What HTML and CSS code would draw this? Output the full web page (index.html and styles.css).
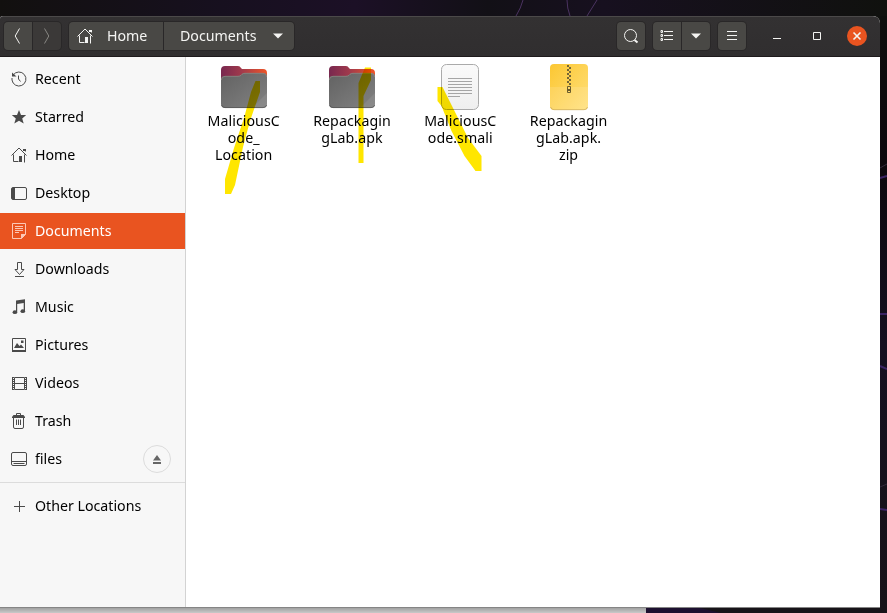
FILE: index.html
```html
<!DOCTYPE html>
<html lang="en">
<head>
<meta charset="utf-8">
<title>Documents</title>
<link rel="stylesheet" href="styles.css">
</head>
<body>
<div class="desktop">
<svg class="wallpaper" viewBox="0 0 887 613">
  <defs>
    <linearGradient id="glow"><stop offset="0" stop-color="#12100f"/><stop offset=".25" stop-color="#17101f"/><stop offset=".4" stop-color="#1c1026"/><stop offset=".55" stop-color="#121016"/><stop offset=".68" stop-color="#17101f"/><stop offset="1" stop-color="#10110e"/></linearGradient>
    <linearGradient id="edge" x2="0" y2="1"><stop offset="0" stop-color="#0e0f0d"/><stop offset=".25" stop-color="#0c080d"/><stop offset=".55" stop-color="#151020"/><stop offset="1" stop-color="#171318"/></linearGradient>
  </defs>
  <path fill="url(#glow)" d="M0 0h887v24H0z"/>
  <path fill="url(#edge)" d="M880 16h7v597h-7z"/>
  <path fill="#171318" d="M646 607h241v6H646z"/>
  <path fill="#1d1030" d="M646 607h50l25 6h-75z"/>
  <g fill="none" stroke="#4b3361"><path d="M523 0q-2 8-7 16M567 0q0 8 3 16M597 0l-10 16"/></g>
  <g fill="none" stroke="#3b2464"><path d="M880 178l7-2M880 314h7M880 366l7 3M880 509l7 1" stroke-width="2"/><path d="M880 168l7-4M880 487l7-3" stroke="#332b3b"/></g>
</svg>
<main class="window">
  <header class="headerbar">
    <div class="group nav">
      <button class="btn"><svg width="16" height="16" viewBox="0 0 16 16"><path class="line" d="M9.500 .5 5.200 8l4.300 7.500"/></svg></button>
      <button class="btn disabled"><svg width="16" height="16" viewBox="0 0 16 16"><path class="line" d="M5.500 .5 9.800 8l-4.300 7.500"/></svg></button>
    </div>
    <div class="group path">
      <button class="btn crumb-home"><svg width="16" height="16" viewBox="0 0 16 16"><path class="line" d="M.5 8.500 8 1l7.500 7.500M2.500 7.500v7h5M13.500 7.500v8"/><path d="M8 9h3v6H8zM12 2h3v3l-1-1h-2z"/></svg><span class="text">Home</span></button>
      <button class="btn crumb-doc"><span class="text doc-text">Documents</span><svg width="10" height="6" viewBox="0 0 10 6"><path d="M0 .5h10L5 5.500z"/></svg></button>
    </div>
    <div class="tools">
      <button class="btn single"><svg width="16" height="16" viewBox="0 0 16 16"><circle class="line" cx="7.500" cy="7.500" r="6"/><path class="line heavy" d="m11.500 12 3 2.500"/></svg></button>
      <div class="group">
        <button class="btn"><svg width="14" height="12" viewBox="0 0 14 12"><path class="line" d="M4 1.500h9M4 5.500h9M4 9.500h9M1 .5h1.500v2H1zM1 4.500h1.500v2H1zM1 8.500h1.500v2H1z"/></svg></button>
        <button class="btn"><svg width="10" height="6" viewBox="0 0 10 6"><path d="M0 .5h10L5 5.500z"/></svg></button>
      </div>
      <button class="btn single"><svg width="10" height="10" viewBox="0 0 10 10"><path class="line" d="M0 .5h10M0 4.500h10M0 8.500h10"/></svg></button>
    </div>
    <div class="controls">
      <svg width="8" height="8" viewBox="0 0 8 8"><path d="M0 6h8v1H0z"/></svg>
      <svg width="8" height="8" viewBox="0 0 8 8"><path class="line" d="M.5 .5h7v7h-7z"/></svg>
      <svg width="20" height="20" viewBox="0 0 20 20"><circle class="close" cx="10" cy="10" r="10"/><path class="line cross" d="m6.500 6.500 7 7m0-7-7 7"/></svg>
    </div>
  </header>
  <div class="body">
    <nav class="sidebar">
      <div class="row"><svg class="icon" viewBox="0 0 16 16"><path class="line" d="M2.200 4A7 7 0 1 1 1 9M7.500 4.500V8l2 2.500"/><path d="M1 1.500v4h4.500zM.5 7h1v2h-1z"/></svg><span>Recent</span></div>
      <div class="row"><svg class="icon" viewBox="0 0 16 16"><path d="m8 1 2 5 5.200.1-4 3.300 1.500 5L8 11.700l-4.700 2.700 1.500-5-4-3.300L6 6z"/></svg><span>Starred</span></div>
      <div class="row"><svg class="icon" viewBox="0 0 16 16"><path class="line" d="M.5 8.500 8 1l7.500 7.500M2.500 7.500v7h5M13.500 7.500v8"/><path d="M8 9h3v6H8zM12 2h3v3l-1-1h-2z"/></svg><span>Home</span></div>
      <div class="row"><svg class="icon" viewBox="0 0 16 16"><rect class="line" x=".5" y="2.500" width="15" height="12" rx="1.500"/><path d="M1 3h3v11H1z"/></svg><span>Desktop</span></div>
      <div class="row selected"><svg class="icon" viewBox="0 0 16 16"><path class="line" d="M1.500 .5h13v11l-4 4h-9zM4 3.500h8M4 5.500h8M4 7.500h8M4 9.500h4"/><path d="M10 11h5l-5 5z"/></svg><span>Documents</span></div>
      <div class="row"><svg class="icon" viewBox="0 0 16 16"><path class="line" d="M6.500 1.500h4v7H13L8.500 13.500 4 8.500h2.500zM4 15.500h9"/></svg><span>Downloads</span></div>
      <div class="row"><svg class="icon" viewBox="0 0 16 16"><path d="M5 1.500 14 .3v12h-1.300V4L6.200 5v8.200H5z"/><ellipse cx="3.900" cy="13.200" rx="2.300" ry="1.900"/><ellipse cx="11.800" cy="12.200" rx="2.300" ry="1.900"/></svg><span>Music</span></div>
      <div class="row"><svg class="icon" viewBox="0 0 16 16"><path class="line" d="M1.500 1.500h13v12h-13z"/><path d="M1 13h14v2H1zM3 11l3-5 2.500 3L10 7.500l3 3.500zM10 3.500h2.500V6H10z"/></svg><span>Pictures</span></div>
      <div class="row"><svg class="icon" viewBox="0 0 16 16"><path class="line" d="M3.500 2.500h10v12h-10zM3 8.500h11"/><path class="line" d="M1.500 2v13M15.500 2v13"/><path class="line" d="M2.500 2v13M14.500 2v13" stroke-dasharray="1 1"/></svg><span>Videos</span></div>
      <div class="row"><svg class="icon" viewBox="0 0 16 16"><path class="line" d="M2.500 5v9q0 1.500 1.500 1.500h7q1.500 0 1.500-1.500V5M5.500 6.500V12M7.500 6.500V12M9.500 6.500V12M5.500 2V.5h4V2"/><path d="M2.500 2h10l1.500 2v1H1V4z"/></svg><span>Trash</span></div>
      <div class="row"><svg class="icon" viewBox="0 0 16 16"><rect class="line" x=".5" y="1.500" width="15" height="13" rx="1.500"/><path class="line" d="M1 10.500h14M2.500 12.500h11"/></svg><span>files</span><button class="eject"><svg width="8" height="9" viewBox="0 0 8 9"><path d="M4 0 8 5.500H0zM0 7h8v2H0z"/></svg></button></div>
      <hr>
      <div class="row"><svg class="icon" viewBox="0 0 16 16"><path class="line" d="M3 8.500h11M8.500 3v11"/></svg><span>Other Locations</span></div>
    </nav>
    <section class="files">
      <svg class="defs" width="0" height="0"><defs>
        <linearGradient id="tab"><stop stop-color="#78284f"/><stop offset=".45" stop-color="#a13a4c"/><stop offset="1" stop-color="#ef5528"/></linearGradient>
        <linearGradient id="front" x2="1" y2="1"><stop stop-color="#626262"/><stop offset="1" stop-color="#828282"/></linearGradient>
        <linearGradient id="paper" x2="0" y2="1"><stop stop-color="#fafafa"/><stop offset="1" stop-color="#efefef"/></linearGradient>
        <linearGradient id="zip" x2="1" y2="1"><stop stop-color="#fcc732"/><stop offset="1" stop-color="#ffe07c"/></linearGradient>
        <symbol id="folder" viewBox="0 0 48 48"><path fill="url(#tab)" d="M1 7q0-4 4-4h13q2 0 3 2l1 1h21q4 0 4 4v12H1z"/><path fill="url(#front)" d="M1 17q0-4 4-4h13q2 0 3-1l1-1q1-1 3-1h18q4 0 4 4v27q0 4-4 4H5q-4 0-4-4z"/><path fill="none" stroke="#8e8782" stroke-width=".8" d="M1.300 17q0-3.700 3.700-3.700h13q2 0 3-1l1-1q1-1 3-1h18q3.700 0 3.700 3.700"/><path fill="#fff" opacity=".08" d="M47 30v11q0 4-4 4H32z"/><path fill="none" stroke="#505050" stroke-width=".7" d="M1.500 42q1 2.600 3.500 2.600h38q3 0 3.700-2.600"/></symbol>
      </defs></svg>
      <div class="file"><svg class="big" viewBox="0 0 48 48"><use href="#folder"/></svg><p>MaliciousC<br>ode_<br>Location</p></div>
      <div class="file"><svg class="big" viewBox="0 0 48 48"><use href="#folder"/></svg><p>Repackagin<br>gLab.apk</p></div>
      <div class="file"><svg class="big" viewBox="0 0 48 48"><rect x="5.500" y="1.500" width="37" height="45" rx="5" fill="url(#paper)" stroke="#aaa"/><path stroke="#a5a5a5" d="M12 15.500h24M12 18.500h24M12 21.500h24M12 24.500h24M12 27.500h24M12 30.500h24M12 33.500h12"/></svg><p>MaliciousC<br>ode.smali</p></div>
      <div class="file"><svg class="big" viewBox="0 0 48 48"><rect x="5" y="1" width="38" height="46" rx="4" fill="url(#zip)"/><path fill="#fff" opacity=".12" d="M5 24h38v19q0 4-4 4H9q-4 0-4-4z"/><path fill="none" stroke="#c9a95a" stroke-width=".7" d="M5.500 44q1 2.700 3.500 2.700h30q3 0 3.500-2.700"/><path stroke="#756637" stroke-width="2" stroke-dasharray="2 2" d="M23 2v20"/><path stroke="#756637" stroke-width="2" stroke-dasharray="2 2" d="M25 4v20"/><path fill="none" stroke="#6b5c2d" d="M22.500 23.500h3v6h-3z"/><path fill="#6b5c2d" d="M22 26h4v2h-4z"/></svg><p>Repackagin<br>gLab.apk.<br>zip</p></div>
    </section>
  </div>
</main>
<svg class="marker" viewBox="0 0 887 613"><path d="M255.500 81H260v11l-10 29-7 26-8 38-4 9h-6v-15l9-31 10-30 7-26zM365 67.500h6V80l-7.500 16v67h-5V83zM437.500 87h5l11 22 14.500 29 13.500 18v15h-6l-11-15-13-25-10-25-4-5z"/></svg>
</div>
</body>
</html>
```
FILE: styles.css
```css
* { box-sizing: border-box; }
body { margin: 0; font: 14.2px/17px "Noto Sans", sans-serif; color: #000; overflow: hidden; }
.desktop { position: relative; width: 887px; height: 613px; padding-top: 16px; isolation: isolate; background: linear-gradient(#999 607px, #c9c9c9 613px); }
.wallpaper, .marker { position: absolute; left: 0; top: 0; width: 887px; height: 613px; pointer-events: none; }
.wallpaper { z-index: -1; }
.marker { fill: #ffe600; mix-blend-mode: multiply; }
.window { width: 880px; height: 592px; display: flex; flex-direction: column; background: #fff; border-radius: 3px 7px 0 0; overflow: hidden; }
.headerbar { height: 41px; flex: none; display: flex; align-items: flex-start; padding: 5px 13px 0 4px; background: linear-gradient(#333132, #302e2f); border-top: 1px solid #4b4949; border-bottom: 1px solid #1e1a1c; color: #f4f4f2; }
button { font: inherit; color: inherit; border: 0; padding: 0; margin: 0; background: none; }
svg { display: block; fill: currentColor; flex: none; }
.line { fill: none; stroke: currentColor; stroke-width: 1; }
.heavy { stroke-width: 2; }
.group { display: flex; gap: 1px; background: #292728; border-radius: 4px; box-shadow: 0 0 0 1px #292728; }
.btn { width: 28px; height: 28px; display: flex; align-items: center; justify-content: center; background: #494845; }
.group .btn:first-child { border-radius: 4px 0 0 4px; }
.group .btn:last-child { border-radius: 0 4px 4px 0; }
.single { border-radius: 4px; box-shadow: 0 0 0 1px #292728; }
.group .disabled { background: #3b3938; color: #888783; }
.path { margin-left: 8px; }
.crumb-home { width: 94px; justify-content: flex-start; padding-left: 8px; gap: 14px; }
.crumb-doc { width: 130px; justify-content: flex-start; padding-left: 16px; }
.text { padding-bottom: 2px; }
.doc-text { width: 93px; text-align: left; }
.tools { margin-left: auto; display: flex; gap: 8px; }
.controls { height: 28px; margin-left: 27px; display: flex; align-items: center; }
.controls svg + svg { margin-left: 32px; }
.controls svg:last-child { margin-left: 26px; }
.close { fill: #e95420; }
.cross { stroke-width: 1.6; }
.body { flex: 1; display: flex; border-bottom: 1px solid #858585; }
.sidebar { width: 186px; padding-top: 4px; background: #f7f7f7; border-right: 1px solid #d3d3d3; }
.row { height: 36px; margin-bottom: 2px; padding: 0 14px 0 11px; display: flex; align-items: center; gap: 8px; }
.row span { padding-bottom: 2px; }
.icon { width: 16px; height: 16px; color: #4a4a4a; }
.selected { background: #e95420; color: #fff; }
.selected .icon { color: #fcc8b6; }
hr { border: 0; height: 1px; margin: 5px 0 5px; background: #dcdcdc; }
.eject { margin-left: auto; width: 28px; height: 28px; border: 1px solid #dcdcdc; border-radius: 50%; display: grid; place-items: center; color: #666; }
.files { flex: 1; display: flex; align-items: flex-start; padding: 6px 0 0 3.500px; }
.defs { position: absolute; }
.file { width: 108.300px; display: flex; flex-direction: column; align-items: center; }
.big { width: 48px; height: 48px; }
.file p { margin: 1px 0 0; text-align: center; letter-spacing: .05px; }
```
